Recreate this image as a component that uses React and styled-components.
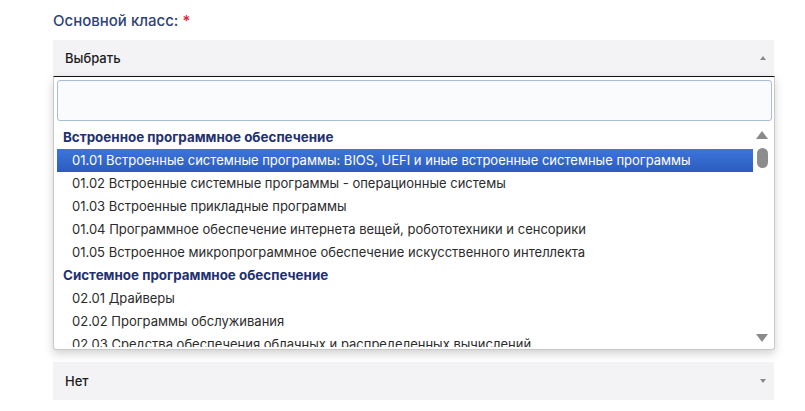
import React from 'react'
import styled, { createGlobalStyle } from 'styled-components'

const GlobalStyle = createGlobalStyle`
  body {
    margin: 0;
    background: #fff;
    font-family: Inter, "Noto Sans", sans-serif;
  }
`

const Page = styled.div`
  padding: 12px 0 0 53px;
  width: 721px;
`
const Field = styled.div`
  position: relative;
  margin-bottom: ${p => p.$gap || 0}px;
`
const Label = styled.div`
  font-size: 15px;
  font-weight: 500;
  color: #2f4377;
  height: 28px;
  line-height: 18px;
`
const Star = styled.span`
  color: #d8203a;
  margin-left: 4px;
`
const SelectBox = styled.div`
  height: ${p => p.$h || 36}px;
  background: #f3f3f5;
  display: flex;
  align-items: center;
  justify-content: space-between;
  padding: 0 8px 0 12px;
  font-size: 13px;
  font-weight: 500;
  color: #1c1c1c;
`
const Caret = styled.span`
  width: 0;
  height: 0;
  border-left: 3px solid transparent;
  border-right: 3px solid transparent;
  ${p => p.$up
    ? 'border-bottom: 4px solid #8a8a8a;'
    : 'border-top: 4px solid #8a8a8a;'}
`
const Dropdown = styled.div`
  position: absolute;
  top: 64px;
  left: 0;
  right: -1px;
  background: #fff;
  border: 1px solid #c9c9c9;
  border-top: 1px solid #111;
  border-radius: 0 0 3px 3px;
  box-shadow: 0 4px 10px rgba(0, 0, 0, 0.18);
  padding: 3px 2px 2px 3px;
  z-index: 5;
`
const Search = styled.div`
  height: 39px;
  border: 1px solid #a9bbdd;
  border-radius: 3px;
  background: #fafbfd;
`
const ListWrap = styled.div`
  display: flex;
  height: 221px;
  margin-top: 5px;
  overflow: hidden;
`
const List = styled.div`
  flex: 1;
  overflow: hidden;
`
const Group = styled.div`
  height: 23px;
  line-height: 22px;
  padding-left: 6px;
  font-size: 13.4px;
  font-weight: 700;
  color: #1f3172;
  white-space: nowrap;
`
const Option = styled.div`
  height: 23px;
  line-height: 23px;
  padding-left: 15px;
  font-size: 13px;
  white-space: nowrap;
  color: ${p => (p.$active ? '#fff' : '#2b2b2b')};
  background: ${p => (p.$active ? 'linear-gradient(#3d75db, #2b5cbd)' : 'transparent')};
`
const Scrollbar = styled.div`
  width: 16px;
  margin-left: 1px;
  margin-right: 2px;
  display: flex;
  flex-direction: column;
  align-items: center;
  padding: 5px 0 5px;
`
const Arrow = styled.span`
  width: 0;
  height: 0;
  border-left: 6px solid transparent;
  border-right: 6px solid transparent;
  ${p => p.$up
    ? 'border-bottom: 8px solid #8a8a8a;'
    : 'border-top: 8px solid #8a8a8a;'}
`
const Thumb = styled.div`
  width: 11px;
  height: 20px;
  margin-top: 9px;
  border-radius: 6px;
  background: #8d8d8d;
`
const Track = styled.div`
  flex: 1;
`

const groups = [
  {
    title: 'Встроенное программное обеспечение',
    items: [
      '01.01 Встроенные системные программы: BIOS, UEFI и иные встроенные системные программы',
      '01.02 Встроенные системные программы - операционные системы',
      '01.03 Встроенные прикладные программы',
      '01.04 Программное обеспечение интернета вещей, робототехники и сенсорики',
      '01.05 Встроенное микропрограммное обеспечение искусственного интеллекта',
    ],
  },
  {
    title: 'Системное программное обеспечение',
    items: [
      '02.01 Драйверы',
      '02.02 Программы обслуживания',
      '02.03 Средства обеспечения облачных и распределенных вычислений',
    ],
  },
]

const App = () => {
  return (
    <Page>
      <GlobalStyle />
      <Field $gap={286}>
        <Label>
          Основной класс:<Star>*</Star>
        </Label>
        <SelectBox>
          Выбрать
          <Caret $up />
        </SelectBox>
        <Dropdown>
          <Search />
          <ListWrap>
            <List>
              {groups.map(g => (
                <div key={g.title}>
                  <Group>{g.title}</Group>
                  {g.items.map(item => (
                    <Option key={item} $active={item.startsWith('01.01')}>{item}</Option>
                  ))}
                </div>
              ))}
            </List>
            <Scrollbar>
              <Arrow $up />
              <Thumb />
              <Track />
              <Arrow />
            </Scrollbar>
          </ListWrap>
        </Dropdown>
      </Field>
      <SelectBox $h={38}>
        Нет
        <Caret />
      </SelectBox>
    </Page>
  )
}

export default App
